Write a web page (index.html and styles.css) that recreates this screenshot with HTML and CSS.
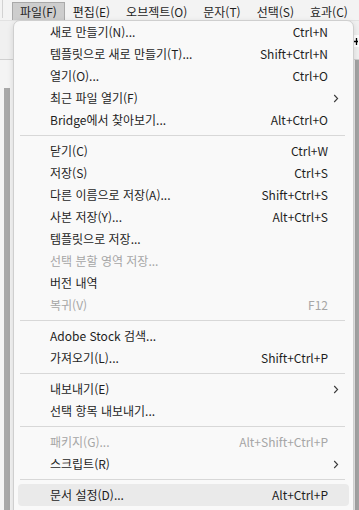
FILE: index.html
```html
<!DOCTYPE html>
<html lang="ko">
<head>
<meta charset="utf-8">
<title>파일 메뉴</title>
<link rel="stylesheet" href="styles.css">
</head>
<body>
<div class="app">
  <div class="menubar">
    <span class="mb-sep"></span>
    <div class="mb-item active">파일(F)</div>
    <div class="mb-item">편집(E)</div>
    <div class="mb-item">오브젝트(O)</div>
    <div class="mb-item">문자(T)</div>
    <div class="mb-item">선택(S)</div>
    <div class="mb-item">효과(C)</div>
  </div>
  <div class="ctrlbar">
    <div class="ctrl-field"><svg width="5" height="7" viewBox="0 0 5 7"><path d="M0 3.5 H5 M3.5 0 V7" stroke="#000" stroke-width="1.3"/></svg></div>
  </div>
  <div class="workspace">
    <div class="toolstrip"><div class="grip"></div></div>
    <div class="canvas"></div>
    <div class="scroll"></div>
  </div>
</div>

<div class="menu">
  <div class="row"><span class="label">새로 만들기(N)...</span><span class="key">Ctrl+N</span><span class="sub"></span></div>
  <div class="row"><span class="label">템플릿으로 새로 만들기(T)...</span><span class="key">Shift+Ctrl+N</span><span class="sub"></span></div>
  <div class="row"><span class="label">열기(O)...</span><span class="key">Ctrl+O</span><span class="sub"></span></div>
  <div class="row"><span class="label">최근 파일 열기(F)</span><span class="key"></span><span class="sub"><svg width="6" height="9" viewBox="0 0 6 9"><path d="M1.2 1 L4.6 4.5 L1.2 8" fill="none" stroke="#3a3a3a" stroke-width="1.1"/></svg></span></div>
  <div class="row"><span class="label">Bridge에서 찾아보기...</span><span class="key">Alt+Ctrl+O</span><span class="sub"></span></div>
  <div class="sep"></div>
  <div class="row"><span class="label">닫기(C)</span><span class="key">Ctrl+W</span><span class="sub"></span></div>
  <div class="row"><span class="label">저장(S)</span><span class="key">Ctrl+S</span><span class="sub"></span></div>
  <div class="row"><span class="label">다른 이름으로 저장(A)...</span><span class="key">Shift+Ctrl+S</span><span class="sub"></span></div>
  <div class="row"><span class="label">사본 저장(Y)...</span><span class="key">Alt+Ctrl+S</span><span class="sub"></span></div>
  <div class="row"><span class="label">템플릿으로 저장...</span><span class="key"></span><span class="sub"></span></div>
  <div class="row disabled"><span class="label">선택 분할 영역 저장...</span><span class="key"></span><span class="sub"></span></div>
  <div class="row"><span class="label">버전 내역</span><span class="key"></span><span class="sub"></span></div>
  <div class="row disabled"><span class="label">복귀(V)</span><span class="key">F12</span><span class="sub"></span></div>
  <div class="sep"></div>
  <div class="row"><span class="label">Adobe Stock 검색...</span><span class="key"></span><span class="sub"></span></div>
  <div class="row"><span class="label">가져오기(L)...</span><span class="key">Shift+Ctrl+P</span><span class="sub"></span></div>
  <div class="sep"></div>
  <div class="row"><span class="label">내보내기(E)</span><span class="key"></span><span class="sub"><svg width="6" height="9" viewBox="0 0 6 9"><path d="M1.2 1 L4.6 4.5 L1.2 8" fill="none" stroke="#3a3a3a" stroke-width="1.1"/></svg></span></div>
  <div class="row"><span class="label">선택 항목 내보내기...</span><span class="key"></span><span class="sub"></span></div>
  <div class="sep"></div>
  <div class="row disabled"><span class="label">패키지(G)...</span><span class="key">Alt+Shift+Ctrl+P</span><span class="sub"></span></div>
  <div class="row"><span class="label">스크립트(R)</span><span class="key"></span><span class="sub"><svg width="6" height="9" viewBox="0 0 6 9"><path d="M1.2 1 L4.6 4.5 L1.2 8" fill="none" stroke="#3a3a3a" stroke-width="1.1"/></svg></span></div>
  <div class="sep"></div>
  <div class="row hover"><span class="label">문서 설정(D)...</span><span class="key">Alt+Ctrl+P</span><span class="sub"></span></div>
</div>
</body>
</html>
```

FILE: styles.css
```css
* { box-sizing: border-box; }

html, body {
  margin: 0;
  padding: 0;
  width: 359px;
  height: 510px;
  overflow: hidden;
}

body {
  font-family: "Noto Sans CJK KR", "Noto Sans", sans-serif;
  font-size: 12px;
  color: #1e1e1e;
  background: #f0f0f0;
  position: relative;
}

.app {
  display: flex;
  flex-direction: column;
  height: 510px;
}

.menubar {
  height: 20px;
  display: flex;
  align-items: flex-end;
  background: #f3f3f3;
}

.mb-sep {
  width: 1px;
  height: 18px;
  margin: 0 9px 2px 2px;
  background: #d2d2d2;
  align-self: flex-start;
}

.mb-item {
  height: 18px;
  line-height: 17px;
  padding: 0 7px;
  white-space: nowrap;
  border: 1px solid transparent;
  border-bottom: none;
}

.mb-item.active {
  background: #cdcdcd;
  border-color: #a9a9a9;
}

.ctrlbar {
  height: 40px;
  background: #f0f0f0;
  border-top: 1px solid #e2e2e2;
  border-bottom: 1px solid #d0d0d0;
  display: flex;
  justify-content: flex-end;
  padding-top: 14px;
}

.ctrl-field {
  width: 8px;
  height: 12px;
  background: #ffffff;
  display: flex;
  align-items: center;
  justify-content: flex-end;
  padding-right: 1px;
}

.ctrl-field svg { display: block; }

.workspace {
  flex: 1;
  display: flex;
}

.toolstrip {
  width: 14px;
  background: #f4f4f4;
  padding: 28px 0 0 4px;
}

.grip {
  width: 6px;
  height: 100%;
  background: #a8a8a8;
}

.canvas {
  flex: 1;
  background: #e8e8e8;
}

.scroll {
  width: 4px;
  background: #a3a3a3;
}

/* dropdown menu overlays the workspace */
.menu {
  position: absolute;
  left: 13px;
  top: 20px;
  width: 341px;
  height: 500px;
  background: #f9f9f9;
  border: 1px solid #cfcfcf;
  border-radius: 7px;
  padding: 0 4px;
  box-shadow: 0 2px 6px rgba(0, 0, 0, 0.12);
}

.row {
  height: 22px;
  line-height: 22px;
  display: grid;
  grid-template-columns: 1fr auto 21px;
  padding-left: 32px;
  border-radius: 4px;
  white-space: nowrap;
}

.row.disabled { color: #a6a6a6; }

.row.hover { background: #eaeaea; }

.key { text-align: right; }

.sub {
  display: flex;
  align-items: center;
  padding-left: 5px;
}

.sub svg { display: block; }

.sep {
  height: 1px;
  margin: 4px 4px 4px 2px;
  background: #d8d8d8;
}
```
